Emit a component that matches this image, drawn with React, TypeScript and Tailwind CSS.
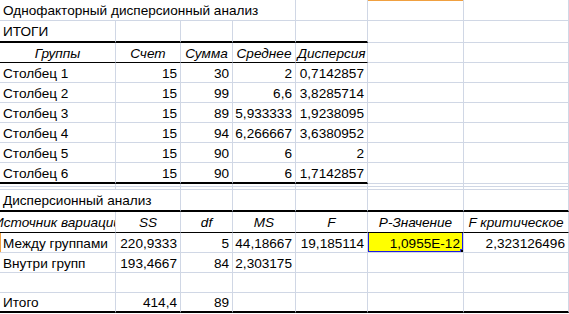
import type { ReactNode } from "react";

type Cell = {
  t?: string;
  a?: "l" | "r" | "c";
  i?: boolean;
  open?: boolean;
  sel?: boolean;
  tag?: "top" | "left";
};

type Row = {
  h: string;
  cells: Cell[];
  bottom: "grid" | "thin" | "thick";
  span?: number;
};

const W = [
  "w-[116px]",
  "w-[65px]",
  "w-[52px]",
  "w-[63px]",
  "w-[72px]",
  "w-[96px]",
  "w-[105px]",
];

const BOTTOM = {
  grid: "border-b border-b-[#d0d7e5]",
  thin: "border-b border-b-black",
  thick: "border-b-2 border-b-black",
};

const num = (...xs: string[]): Cell[] => xs.map((t) => ({ t, a: "r" as const }));
const head = (...xs: string[]): Cell[] => xs.map((t) => ({ t, a: "c" as const, i: true }));

const rows: Row[] = [
  {
    h: "h-[21px]",
    bottom: "grid",
    cells: [
      { t: "Однофакторный дисперсионный анализ", open: true },
      { open: true },
      { open: true },
      {},
      {},
      { tag: "top" },
      {},
    ],
  },
  { h: "h-[22px]", bottom: "thick", span: 5, cells: [{ t: "ИТОГИ" }] },
  {
    h: "h-[20px]",
    bottom: "thin",
    span: 5,
    cells: head("Группы", "Счет", "Сумма", "Среднее", "Дисперсия"),
  },
  { h: "h-[20px]", bottom: "grid", cells: [{ t: "Столбец 1" }, ...num("15", "30", "2", "0,7142857")] },
  { h: "h-[20px]", bottom: "grid", cells: [{ t: "Столбец 2" }, ...num("15", "99", "6,6", "3,8285714")] },
  { h: "h-[20px]", bottom: "grid", cells: [{ t: "Столбец 3" }, ...num("15", "89", "5,933333", "1,9238095")] },
  { h: "h-[20px]", bottom: "grid", cells: [{ t: "Столбец 4" }, ...num("15", "94", "6,266667", "3,6380952")] },
  { h: "h-[20px]", bottom: "grid", cells: [{ t: "Столбец 5" }, ...num("15", "90", "6", "2")] },
  {
    h: "h-[21px]",
    bottom: "thick",
    span: 5,
    cells: [{ t: "Столбец 6" }, ...num("15", "90", "6", "1,7142857")],
  },
  { h: "h-[3px]", bottom: "grid", cells: [] },
  { h: "h-[3px]", bottom: "grid", cells: [] },
  {
    h: "h-[22px]",
    bottom: "thick",
    span: 7,
    cells: [{ t: "Дисперсионный анализ", open: true }],
  },
  {
    h: "h-[21px]",
    bottom: "thin",
    span: 7,
    cells: head("Источник вариации", "SS", "df", "MS", "F", "P-Значение", "F критическое"),
  },
  {
    h: "h-[20px]",
    bottom: "grid",
    cells: [
      { t: "Между группами", tag: "left" },
      ...num("220,9333", "5", "44,18667", "19,185114"),
      { t: "1,0955E-12", a: "r", sel: true },
      { t: "2,323126496", a: "r" },
    ],
  },
  {
    h: "h-[20px]",
    bottom: "grid",
    cells: [{ t: "Внутри групп" }, ...num("193,4667", "84", "2,303175")],
  },
  { h: "h-[20px]", bottom: "grid", cells: [] },
  {
    h: "h-[20px]",
    bottom: "thick",
    span: 7,
    cells: [{ t: "Итого" }, ...num("414,4", "89")],
  },
];

function SheetCell({ c, w, bottom }: { c: Cell; w: string; bottom: string }) {
  const justify = c.a === "r" ? "justify-end" : c.a === "c" ? "justify-center" : "justify-start";
  const inner: ReactNode = c.t ? (
    <span className={`whitespace-nowrap ${c.i ? "italic" : ""}`}>{c.t}</span>
  ) : null;

  return (
    <div
      className={`relative flex shrink-0 items-center px-[3px] pt-px ${w} ${justify} ${bottom} ${
        c.open ? "overflow-visible" : "overflow-hidden border-r border-r-[#d0d7e5]"
      } ${c.sel ? "bg-[#ffff00]" : ""}`}
    >
      {c.tag === "top" && <div className="absolute left-0 right-0 top-0 h-px bg-[#f0a040]" />}
      {c.tag === "left" && <div className="absolute bottom-0 left-0 top-0 w-px bg-[#f0a040]" />}
      {inner}
      {c.sel && (
        <>
          <div className="pointer-events-none absolute -left-[1px] -top-[2px] -bottom-[1px] -right-[1px] border-2 border-[#1c1ce0] shadow-[0_0_0_1px_#10105a]" />
          <div className="absolute -bottom-[3px] -right-[3px] h-[6px] w-[6px] border border-[#3030d0] bg-black" />
        </>
      )}
    </div>
  );
}

export default function App() {
  return (
    <div className="h-[314px] w-[569px] overflow-hidden bg-white font-['Liberation_Sans',Arial,sans-serif] text-[13.6px] leading-[15px] text-black">
      {rows.map((r, ri) => (
        <div key={ri} className={`flex ${r.h}`}>
          {W.map((w, ci) => {
            const c = r.cells[ci] ?? {};
            const bottom = r.bottom !== "grid" && ci < (r.span ?? 7) ? BOTTOM[r.bottom] : BOTTOM.grid;
            return <SheetCell key={ci} c={c} w={w} bottom={bottom} />;
          })}
        </div>
      ))}
    </div>
  );
}
